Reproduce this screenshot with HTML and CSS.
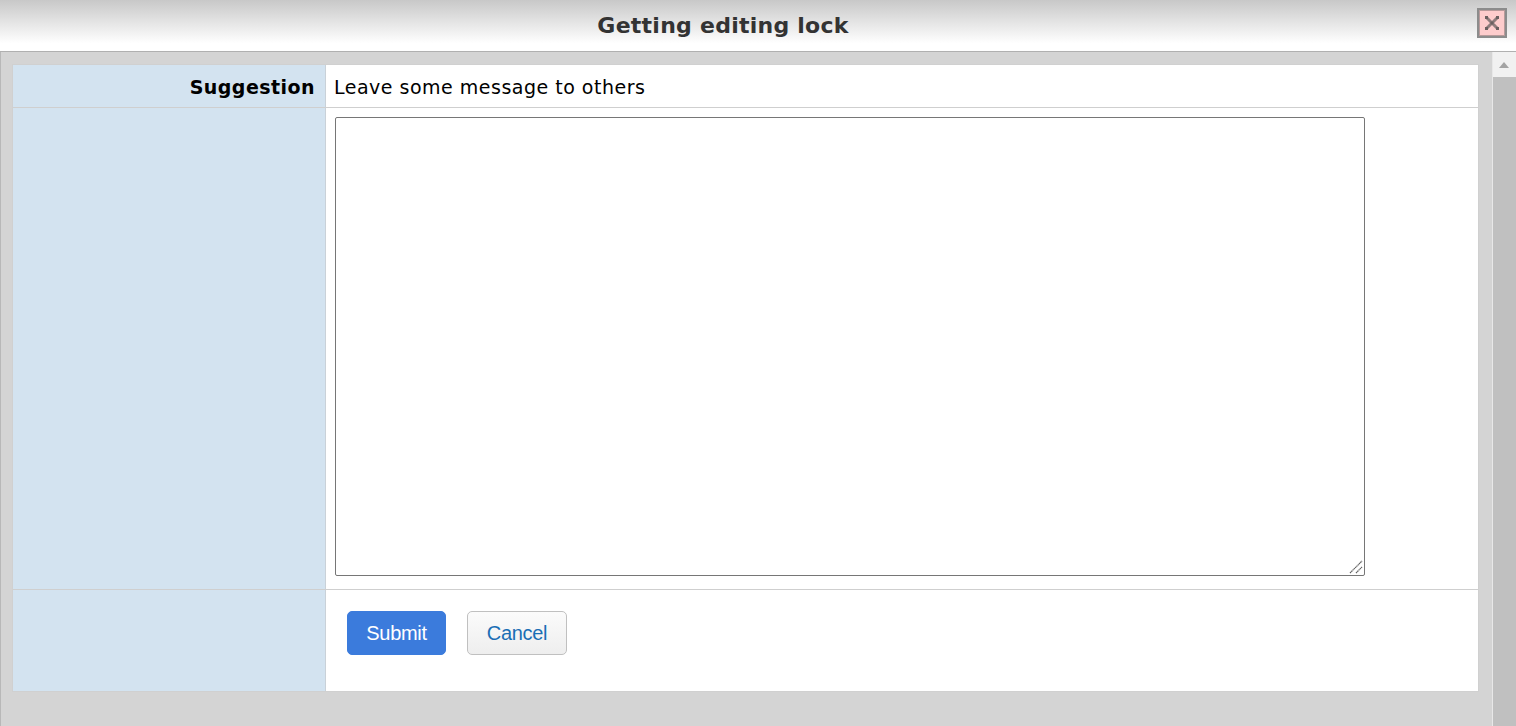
FILE: index.html
```html
<!DOCTYPE html>
<html lang="en">
<head>
    <meta charset="UTF-8">
    <meta name="viewport" content="width=device-width, initial-scale=1.0">
    <title>Getting editing lock</title>
    <link rel="stylesheet" href="styles.css">
</head>
<body>
    <div class="dialog-header">
        <h1 class="dialog-title">Getting editing lock</h1>
        <button class="close-btn" aria-label="Close">
            <svg class="close-icon" width="16" height="16" viewBox="0 0 16 16">
                <path d="M2 2L14 14M14 2L2 14" stroke="#8e7c7c" stroke-width="3" fill="none"/>
                <path d="M1 1h3v3H1zM12 1h3v3h-3zM1 12h3v3H1zM12 12h3v3h-3zM6.500 6.500h3v3h-3z" fill="#6a6060"/>
            </svg>
        </button>
    </div>
    <div class="dialog-body">
        <div class="content">
            <div class="form-table">
                <div class="label-cell row-first">Suggestion</div>
                <div class="value-cell row-first"><span class="value-text">Leave some message to others</span></div>
                <div class="label-cell row-middle"></div>
                <div class="value-cell row-middle">
                    <div class="message-wrap">
                        <textarea class="message-box"></textarea>
                        <svg class="resize-grip" width="16" height="16" viewBox="0 0 16 16">
                            <path d="M3 15L15 3M9 15L15 9" stroke="#606060" stroke-width="1.200" stroke-dasharray="1.414 0.4" fill="none"/>
                        </svg>
                    </div>
                </div>
                <div class="label-cell"></div>
                <div class="value-cell button-row">
                    <button class="btn btn-primary">Submit</button>
                    <button class="btn btn-default">Cancel</button>
                </div>
            </div>
        </div>
        <div class="scrollbar">
            <div class="scroll-arrow"><span class="arrow-up"></span></div>
            <div class="scroll-thumb"></div>
        </div>
    </div>
</body>
</html>
```

FILE: styles.css
```css
* {
    box-sizing: border-box;
}
html, body {
    height: 100%;
}
body {
    margin: 0;
    display: flex;
    flex-direction: column;
    overflow: hidden;
    font-family: "DejaVu Sans", Verdana, sans-serif;
    background-color: #d4d4d4;
}
.dialog-header {
    position: relative;
    height: 52px;
    flex-shrink: 0;
    display: flex;
    justify-content: center;
    align-items: center;
    padding-bottom: 1px;
    border-bottom: 1px solid #b0b0b0;
    background: linear-gradient(to bottom, #c8c8c8, #ffffff 85%);
}
.dialog-title {
    margin: 0 0 0 -70px;
    font-size: 22px;
    font-weight: bold;
    letter-spacing: 0.25px;
    color: #333;
}
.close-btn {
    position: absolute;
    top: 8px;
    right: 9px;
    width: 30px;
    height: 30px;
    padding: 0;
    display: flex;
    justify-content: center;
    align-items: center;
    border: 2px solid #8c8c8c;
    outline: 1px solid #b89a9a;
    outline-offset: -3px;
    background-color: #fdcccc;
}
.close-icon {
    flex-shrink: 0;
}
.dialog-body {
    flex: 1;
    display: flex;
    min-height: 0;
    border-left: 1px solid #b8b8b8;
}
.content {
    flex: 1;
    padding: 12px 13px 0 11px;
}
.form-table {
    display: grid;
    grid-template-columns: 313px 1fr;
    grid-template-rows: 43px 482px 101px;
    border: 1px solid #d0d0d0;
    background-color: #fff;
}
.label-cell {
    padding: 11px 10px 0 0;
    text-align: right;
    font-size: 19px;
    font-weight: bold;
    letter-spacing: 0.45px;
    color: #000;
    background-color: #d3e3f0;
    border-right: 1px solid #c9d1d8;
}
.value-cell {
    padding: 11px 9px 0;
    font-size: 19px;
    letter-spacing: 0.5px;
    color: #000;
}
.value-text {
    margin-left: -1px;
}
.row-first, .row-middle {
    border-bottom: 1px solid #cfcfcf;
}
.message-wrap {
    position: relative;
    width: 1030px;
    height: 459px;
    margin-top: -2px;
}
.message-box {
    display: block;
    width: 100%;
    height: 100%;
    resize: none;
    border: 1px solid #767676;
    border-radius: 2px;
    background-color: #fff;
}
.resize-grip {
    position: absolute;
    right: 2px;
    bottom: 2px;
}
.button-row {
    display: flex;
    align-items: flex-start;
    gap: 21px;
    padding: 21px 21px 0;
}
.btn {
    width: 100px;
    height: 44px;
    border-radius: 5px;
    font-family: "Liberation Sans", Arial, sans-serif;
    font-size: 20px;
    letter-spacing: -0.3px;
}
.btn-primary {
    width: 99px;
    border: 1px solid #3b7bdc;
    background-color: #3b7bdc;
    color: #fff;
}
.btn-default {
    border: 1px solid #c0c0c0;
    background: linear-gradient(to bottom, #fbfbfb, #eeeeee);
    color: #1a6eb5;
}
.scrollbar {
    width: 24px;
    flex-shrink: 0;
    border-left: 1px solid #e8e8e8;
    background-color: #c0c0c0;
}
.scroll-arrow {
    height: 25px;
    display: flex;
    justify-content: center;
    padding: 10px 2px 0 0;
    background-color: #f1f1f1;
}
.arrow-up {
    width: 0;
    height: 0;
    border-left: 5px solid transparent;
    border-right: 5px solid transparent;
    border-bottom: 6px solid #a3a3a3;
}
.scroll-thumb {
    height: 100%;
    background-color: #c0c0c0;
}
```
